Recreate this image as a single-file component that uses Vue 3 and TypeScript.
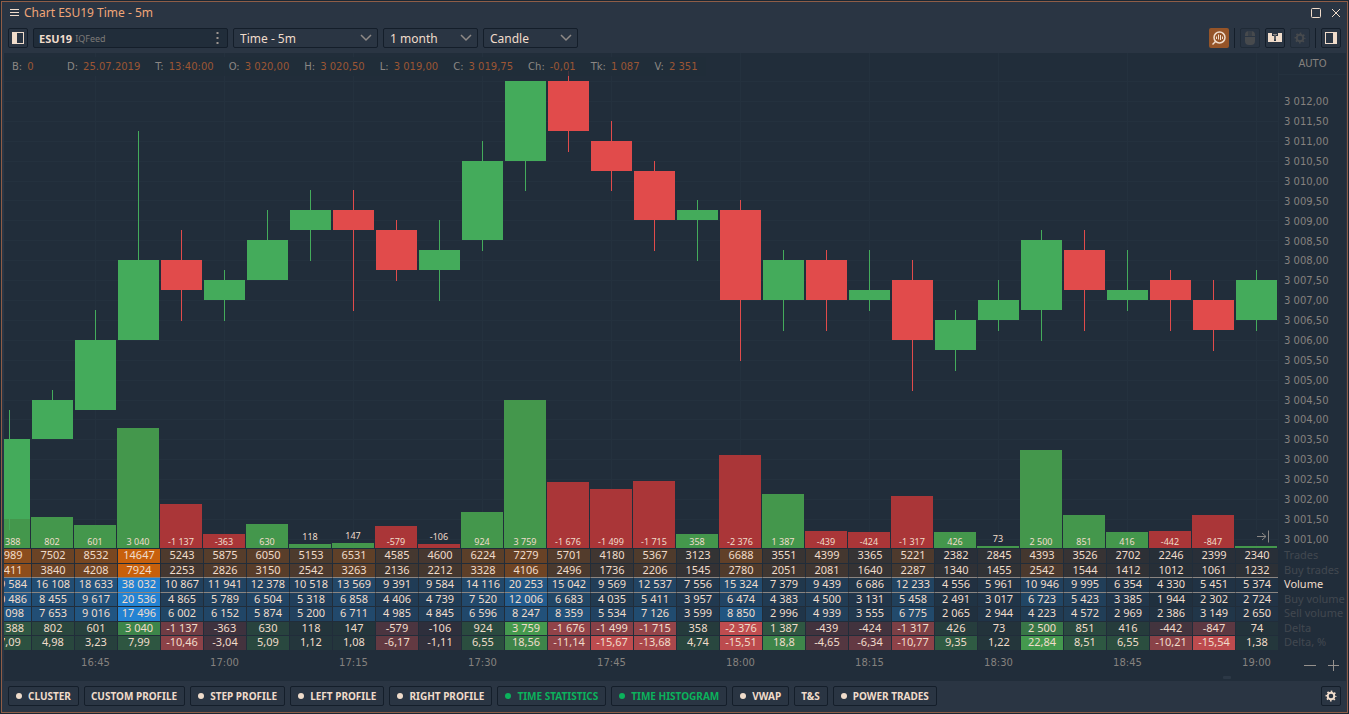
<script setup lang="ts">
import { ref } from 'vue'

type Rgb = [number, number, number]

const COL = 43
const PLOT_TOP = 53
const PLOT_HEIGHT = 496
const BASELINE = 495

const info: [string, string][] = [
  ['B:', '0'], ['D:', '25.07.2019'], ['T:', '13:40:00'], ['O:', '3 020,00'], ['H:', '3 020,50'],
  ['L:', '3 019,00'], ['C:', '3 019,75'], ['Ch:', '-0,01'], ['Tk:', '1 087'], ['V:', '2 351'],
]

// open, close, high, low as offsets from 3000
const candles: [number, number, number, number][] = [
  [1.5, 3.5, 4.25, 1.25], [3.5, 4.5, 4.75, 3.5], [4.25, 6, 6.75, 4.25], [6, 8, 11.25, 6],
  [8, 7.25, 8.75, 6.5], [7, 7.5, 7.75, 6.5], [7.5, 8.5, 9.25, 7.5], [8.75, 9.25, 9.75, 8],
  [9.25, 8.75, 9.75, 6.75], [8.75, 7.75, 9, 7.5], [7.75, 8.25, 9, 7], [8.5, 10.5, 11, 8.25],
  [10.5, 12.5, 12.5, 9.75], [12.5, 11.25, 12.75, 10.75], [11, 10.25, 11.5, 9.75], [10.25, 9, 10.5, 8.25],
  [9, 9.25, 9.5, 8], [9.25, 7, 9.5, 5.5], [7, 8, 8.25, 6.25], [8, 7, 8.25, 6.25],
  [7, 7.25, 8.25, 6.75], [7.5, 6, 8, 4.75], [5.75, 6.5, 6.75, 5.25], [6.5, 7, 7.5, 6.25],
  [6.75, 8.5, 8.75, 6], [8.25, 7.25, 8.75, 6.25], [7, 7.25, 8.25, 6.75], [7.5, 7, 7.75, 6.25],
  [7, 6.25, 7.5, 5.75], [6.5, 7.5, 7.75, 6.25],
]

const trades = [9989, 7502, 8532, 14647, 5243, 5875, 6050, 5153, 6531, 4585, 4600, 6224, 7279, 5701, 4180, 5367, 3123, 6688, 3551, 4399, 3365, 5221, 2382, 2845, 4393, 3526, 2702, 2246, 2399, 2340]
const buyTrades = [5411, 3840, 4208, 7924, 2253, 2826, 3150, 2542, 3263, 2136, 2212, 3328, 4106, 2496, 1736, 2206, 1545, 2780, 2051, 2081, 1640, 2287, 1340, 1455, 2542, 1544, 1412, 1012, 1061, 1232]
const volume = [19584, 16108, 18633, 38032, 10867, 11941, 12378, 10518, 13569, 9391, 9584, 14116, 20253, 15042, 9569, 12537, 7556, 15324, 7379, 9439, 6686, 12233, 4556, 5961, 10946, 9995, 6354, 4330, 5451, 5374]
const buyVolume = [10486, 8455, 9617, 20536, 4865, 5789, 6504, 5318, 6858, 4406, 4739, 7520, 12006, 6683, 4035, 5411, 3957, 6474, 4383, 4500, 3131, 5458, 2491, 3017, 6723, 5423, 3385, 1944, 2302, 2724]
const sellVolume = [9098, 7653, 9016, 17496, 6002, 6152, 5874, 5200, 6711, 4985, 4845, 6596, 8247, 8359, 5534, 7126, 3599, 8850, 2996, 4939, 3555, 6775, 2065, 2944, 4223, 4572, 2969, 2386, 3149, 2650]
const delta = [1388, 802, 601, 3040, -1137, -363, 630, 118, 147, -579, -106, 924, 3759, -1676, -1499, -1715, 358, -2376, 1387, -439, -424, -1317, 426, 73, 2500, 851, 416, -442, -847, 74]
const deltaPct = [7.09, 4.98, 3.23, 7.99, -10.46, -3.04, 5.09, 1.12, 1.08, -6.17, -1.11, 6.55, 18.56, -11.14, -15.67, -13.68, 4.74, -15.51, 18.8, -4.65, -6.34, -10.77, 9.35, 1.22, 22.84, 8.51, 6.55, -10.21, -15.54, 1.38]

const ORANGE: Rgb = [200, 96, 12]
const BLUE: Rgb = [35, 131, 211]
const GREEN: Rgb = [68, 153, 78]
const RED: Rgb = [190, 76, 79]

const spaced = (v: number): string => String(v).replace(/\B(?=(\d{3})+$)/g, ' ')
const comma = (v: number): string => String(v).replace('.', ',')
const fill = (c: Rgb, a: number): string => `rgba(${c[0]}, ${c[1]}, ${c[2]}, ${a.toFixed(3)})`

interface Cell { text: string; color: string }
interface Row { name: string; cells: Cell[]; active: boolean }

function heat(name: string, values: number[], color: Rgb, format: (v: number) => string, active = false): Row {
  const min = Math.min(...values)
  const max = Math.max(...values)
  return {
    name,
    active,
    cells: values.map(v => ({ text: format(v), color: fill(color, 0.04 + 0.96 * (v - min) / (max - min)) })),
  }
}

function signed(name: string, values: number[], format: (v: number) => string): Row {
  const max = Math.max(...values)
  const min = Math.min(...values)
  return {
    name,
    active: false,
    cells: values.map(v => ({
      text: format(v),
      color: v >= 0 ? fill(GREEN, 0.04 + 0.96 * v / max) : fill(RED, 0.04 + 0.96 * v / min),
    })),
  }
}

const rows: Row[] = [
  heat('Trades', trades, ORANGE, String),
  heat('Buy trades', buyTrades, ORANGE, String),
  heat('Volume', volume, BLUE, spaced, true),
  heat('Buy volume', buyVolume, BLUE, spaced),
  heat('Sell volume', sellVolume, BLUE, spaced),
  signed('Delta', delta, spaced),
  signed('Delta, %', deltaPct, comma),
]

const y = (price: number): number => Math.round(100.85 + (12 - price) * 39.83) - PLOT_TOP

const bodies = candles.map(([open, close, high, low], i) => ({
  x: i * COL + 1,
  top: y(Math.max(open, close)),
  height: y(Math.min(open, close)) - y(Math.max(open, close)),
  wickTop: y(high),
  wickHeight: y(low) - y(high) + (low < Math.min(open, close) ? 1 : 0),
  up: close > open,
}))

const peak = Math.max(...delta)
const bars = delta.map((v, i) => {
  const height = Math.floor(Math.abs(v) * 148.5 / peak)
  return {
    x: i * COL,
    height,
    up: v >= 0,
    label: i === delta.length - 1 ? '' : spaced(v),
    labelY: height < 13 ? BASELINE - height - 4 : BASELINE - 3,
  }
})

const hLines = Array.from({ length: 24 }, (_, i) => y(12.5 - i * 0.5))
const vLines = Array.from({ length: 10 }, (_, i) => (2 + i * 3) * COL + 21)

const prices = Array.from({ length: 23 }, (_, i) => {
  const v = 12 - i * 0.5
  return '3 0' + v.toFixed(2).padStart(5, '0').replace('.', ',')
})

const times = delta.map((_, i) => {
  if (i % 3 !== 2) return ''
  const minutes = 16 * 60 + 45 + (i - 2) * 5
  return `${Math.floor(minutes / 60)}:${String(minutes % 60).padStart(2, '0')}`
})

const period = ref('Time - 5m')
const range = ref('1 month')
const style = ref('Candle')

const tools = ref([
  { name: 'CLUSTER', dot: true, on: false },
  { name: 'CUSTOM PROFILE', dot: false, on: false },
  { name: 'STEP PROFILE', dot: true, on: false },
  { name: 'LEFT PROFILE', dot: true, on: false },
  { name: 'RIGHT PROFILE', dot: true, on: false },
  { name: 'TIME STATISTICS', dot: true, on: true },
  { name: 'TIME HISTOGRAM', dot: true, on: true },
  { name: 'VWAP', dot: true, on: false },
  { name: 'T&S', dot: false, on: false },
  { name: 'POWER TRADES', dot: true, on: false },
])
</script>

<template>
  <div class="window">
    <header class="titlebar">
      <button class="plain" aria-label="Menu">
        <svg width="10" height="10" viewBox="0 0 10 10"><path d="M0 1.5h9M0 4.5h9M0 7.5h9" /></svg>
      </button>
      <h1>Chart ESU19 Time - 5m</h1>
      <button class="plain" aria-label="Maximize">
        <svg width="10" height="10" viewBox="0 0 10 10"><rect x="0.5" y="0.5" width="9" height="9" rx="1" /></svg>
      </button>
      <button class="plain" aria-label="Close">
        <svg width="10" height="10" viewBox="0 0 10 10"><path d="M1 1l8 8M9 1l-8 8" /></svg>
      </button>
    </header>

    <div class="toolbar">
      <button class="square" aria-label="Left panel">
        <svg width="18" height="18" viewBox="0 0 18 18">
          <rect x="3.5" y="3.5" width="11" height="11" class="line" /><rect x="3" y="3" width="5" height="12" class="solid" />
        </svg>
      </button>
      <button class="symbol">
        <b>ESU19</b><span>IQFeed</span>
        <svg width="3" height="12" viewBox="0 0 3 12"><path d="M0.5 0h2v2h-2zM0.5 5h2v2h-2zM0.5 10h2v2h-2z" /></svg>
      </button>
      <label class="drop wide">
        <select v-model="period" aria-label="Period"><option>Time - 5m</option></select>
        <svg width="12" height="8" viewBox="0 0 12 8"><path d="M1 1l5 5 5-5" /></svg>
      </label>
      <label class="drop">
        <select v-model="range" aria-label="Range"><option>1 month</option></select>
        <svg width="12" height="8" viewBox="0 0 12 8"><path d="M1 1l5 5 5-5" /></svg>
      </label>
      <label class="drop">
        <select v-model="style" aria-label="Style"><option>Candle</option></select>
        <svg width="12" height="8" viewBox="0 0 12 8"><path d="M1 1l5 5 5-5" /></svg>
      </label>
      <span class="spacer"></span>
      <button class="square hot" aria-label="Analysis">
        <svg width="20" height="20" viewBox="0 0 20 20">
          <circle cx="10.5" cy="9.5" r="5.5" class="line thick" />
          <path d="M6.500 13.500L3.500 16.500" class="line thick" />
          <path d="M7.500 8.500v2.500M9.500 6.500v5M11.500 7v5M13.500 8.500v2.500" class="line" />
        </svg>
      </button>
      <i class="rule"></i>
      <button class="square off" disabled aria-label="Mouse trading">
        <svg width="18" height="18" viewBox="0 0 18 18">
          <rect x="4" y="2" width="10" height="14" rx="4" class="solid" />
          <path d="M4 7.500h10M8 2v5M10 2v5" class="split" />
        </svg>
      </button>
      <button class="square" aria-label="Order book">
        <svg width="18" height="18" viewBox="0 0 18 18">
          <path d="M2 4h14v9H2z" class="solid" />
          <path d="M6 4h6v3h-2v5H8V7H6z" class="cut" />
          <path d="M7 5.500h4M9 5.500v5" class="line faint" />
        </svg>
      </button>
      <button class="square off" disabled aria-label="Chart settings">
        <svg width="18" height="18" viewBox="0 0 18 18">
          <circle cx="9" cy="9" r="3.300" class="line thick" />
          <circle cx="9" cy="9" r="4.500" class="line teeth" />
        </svg>
      </button>
      <i class="rule"></i>
      <button class="square" aria-label="Right panel">
        <svg width="18" height="18" viewBox="0 0 18 18">
          <rect x="3.500" y="3.500" width="11" height="11" class="line" /><rect x="11" y="3" width="4" height="12" class="solid" />
        </svg>
      </button>
    </div>

    <main class="chart">
      <section class="upper">
        <div class="plot">
          <svg class="series" :width="COL * delta.length" :height="PLOT_HEIGHT">
            <line v-for="ly in hLines" :key="'h' + ly" x1="-4000" x2="1294" :y1="ly + 0.5" :y2="ly + 0.5" class="grid" />
            <line v-for="lx in vLines" :key="'v' + lx" :x1="lx + 0.5" :x2="lx + 0.5" y1="0" :y2="PLOT_HEIGHT" class="grid" />
            <rect v-for="b in bars" :key="'b' + b.x" :x="b.x" :y="BASELINE - b.height" width="42" :height="b.height" :class="b.up ? 'bar-up' : 'bar-down'" />
            <g v-for="c in bodies" :key="'c' + c.x" :class="c.up ? 'up' : 'down'">
              <rect :x="c.x + 20" :y="c.wickTop" width="1" :height="c.wickHeight" />
              <rect :x="c.x" :y="c.top" width="41" :height="c.height" />
            </g>
            <text v-for="b in bars" :key="'t' + b.x" :x="b.x + 21" :y="b.labelY" class="bar-label">{{ b.label }}</text>
          </svg>
          <dl class="info">
            <div v-for="[k, v] in info" :key="k"><dt>{{ k }}</dt><dd>{{ v }}</dd></div>
          </dl>
          <button class="latest" aria-label="Go to latest">
            <svg width="12" height="13" viewBox="0 0 12 13"><path d="M0 6.500h9M5 3l4 3.500L5 10M11.500 0.500v12" /></svg>
          </button>
        </div>
        <aside class="axis">
          <button class="auto">AUTO</button>
          <ul><li v-for="p in prices" :key="p">{{ p }}</li></ul>
        </aside>
      </section>

      <section class="stats">
        <table>
          <tbody>
            <tr v-for="r in rows" :key="r.name" :class="{ active: r.active }">
              <td v-for="(c, i) in r.cells" :key="i" :style="{ backgroundColor: c.color }">{{ c.text }}</td>
              <th scope="row">{{ r.name }}</th>
            </tr>
          </tbody>
          <tfoot>
            <tr>
              <td v-for="(t, i) in times" :key="i">{{ t }}</td>
              <td class="scale">
                <div>
                  <button aria-label="Zoom out"><svg width="12" height="12" viewBox="0 0 12 12"><path d="M0 6.500h12" /></svg></button>
                  <button aria-label="Zoom in"><svg width="12" height="12" viewBox="0 0 12 12"><path d="M0 6.500h11M5.500 1v11" /></svg></button>
                </div>
              </td>
            </tr>
          </tfoot>
        </table>
      </section>
      <div class="scroller"><i></i></div>
    </main>

    <footer class="tools">
      <button v-for="t in tools" :key="t.name" class="tool" :class="{ on: t.on }" @click="t.on = !t.on">
        <i v-if="t.dot"></i>{{ t.name }}
      </button>
      <span class="spacer"></span>
      <button class="square" aria-label="Settings">
        <svg width="18" height="18" viewBox="0 0 18 18">
          <circle cx="9" cy="9" r="3.300" class="line thick" />
          <circle cx="9" cy="9" r="4.500" class="line teeth" />
        </svg>
      </button>
    </footer>
  </div>
</template>

<style>
body {
  background: #1b2733;
}
</style>

<style scoped>
* {
  box-sizing: border-box;
}

.window {
  display: flex;
  flex-direction: column;
  min-height: calc(100vh - 2px);
  margin: 1px;
  border: 1px solid #8f5d47;
  background: #2a3543;
  color: #f0dccb;
  font-family: "Noto Sans", "Open Sans", sans-serif;
  font-size: 12px;
}

button {
  margin: 0;
  padding: 0;
  border: 0;
  background: none;
  color: inherit;
  font: inherit;
}

svg {
  display: block;
  fill: none;
}

.titlebar {
  display: flex;
  align-items: center;
  gap: 4px;
  height: 22px;
  padding: 0 6px 0 8px;
}

.titlebar h1 {
  flex: 1;
  margin: 0;
  color: #f0a578;
  font-size: 12px;
  font-weight: 400;
  line-height: 22px;
}

.plain svg {
  stroke: #f0dccb;
}

.plain + .plain {
  margin-left: 6px;
}

.toolbar {
  display: flex;
  align-items: center;
  gap: 5px;
  height: 29px;
  padding: 2px 6px 3px;
}

.spacer {
  flex: 1;
}

.square {
  width: 20px;
  height: 20px;
  border: 1px solid #141e2a;
  border-radius: 2px;
}

.line {
  stroke: #f0dccb;
}

.solid {
  fill: #f0dccb;
}

.cut {
  fill: #2a3543;
}

.split {
  stroke: #2a3543;
}

.faint {
  stroke: #8d8886;
}

.thick {
  stroke-width: 2;
}

.teeth {
  stroke-width: 2;
  stroke-dasharray: 1.534 2;
  stroke-dashoffset: 0.767;
}

.hot {
  border: 0;
  background: #955428;
}

.hot .thick {
  stroke-width: 1.5;
}

.off {
  border-color: #202b37;
}

.off .solid {
  fill: #474a4d;
}

.off .line {
  stroke: #474a4d;
}

.rule {
  width: 1px;
  height: 20px;
  background: #141e2a;
}

.symbol {
  display: flex;
  align-items: center;
  gap: 3px;
  width: 195px;
  height: 20px;
  padding: 0 8px 0 5px;
  border: 1px solid #141e2a;
  border-radius: 2px;
  background: #212d3a;
  font-size: 11px;
}

.symbol span {
  flex: 1;
  color: #7d7a78;
  font-size: 9px;
  text-align: left;
}

.symbol svg {
  fill: #9d958f;
}

.drop {
  display: grid;
  align-items: center;
  width: 95px;
  height: 20px;
  border: 1px solid #141e2a;
  border-radius: 2px;
}

.drop.wide {
  width: 145px;
}

.drop select,
.drop svg {
  grid-area: 1 / 1;
}

.drop select {
  width: 100%;
  height: 18px;
  padding: 0 20px 0 6px;
  border: 0;
  appearance: none;
  background: none;
  color: inherit;
  font: inherit;
}

.drop svg {
  justify-self: end;
  margin-right: 5px;
  stroke: #8f8a87;
  stroke-width: 1.5;
  pointer-events: none;
}

.chart {
  flex: 1;
  margin: 0 1px 0 2px;
  background: #212d3a;
}

.upper {
  display: flex;
}

.plot {
  position: relative;
  display: flex;
  flex: 1;
  justify-content: flex-end;
  min-width: 0;
  overflow: hidden;
}

.series {
  flex: none;
  overflow: visible;
}

.grid {
  stroke: #24313e;
}

.up {
  fill: #44ab5b;
}

.down {
  fill: #e14b4b;
}

.bar-up {
  fill: #44974c;
}

.bar-down {
  fill: #aa3638;
}

.bar-label {
  fill: #f0dccb;
  font-size: 9px;
  text-anchor: middle;
}

.info {
  position: absolute;
  top: 4px;
  left: 0;
  display: flex;
  gap: 15px;
  margin: 0;
  padding: 0 8px;
  background: rgba(33, 45, 58, 0.8);
  color: #8b8784;
  font-family: "DejaVu Sans", sans-serif;
  font-size: 10px;
  line-height: 19px;
}

.info div {
  display: flex;
  gap: 5px;
  min-width: 40px;
}

.info dd {
  margin: 0;
  color: #9c5634;
}

.latest {
  position: absolute;
  right: 8px;
  bottom: 6px;
  padding: 0 1px;
  background: #212d3a;
}

.latest svg {
  stroke: #8b8784;
}

.axis {
  width: 68px;
  border-left: 1px solid #24313e;
  color: #85817e;
  font-family: "DejaVu Sans", sans-serif;
  font-size: 10px;
}

.auto {
  display: block;
  width: 100%;
  height: 22px;
  border-bottom: 1px solid #24313e;
}

.axis ul {
  display: flex;
  flex-direction: column;
  height: 457px;
  margin: 17px 0 0;
  padding: 0 0 0 5px;
  list-style: none;
}

.axis li {
  display: flex;
  flex: 1;
  align-items: center;
}

.stats {
  display: flex;
  justify-content: flex-end;
  overflow-x: clip;
  overflow-y: visible;
}

table {
  flex: none;
  width: 1358px;
  border-collapse: separate;
  border-spacing: 0;
  table-layout: fixed;
}

td,
th {
  padding: 0;
  line-height: 12px;
  vertical-align: top;
  white-space: nowrap;
}

td {
  width: 43px;
  border: 0 solid #212d3a;
  border-width: 0 0 1px 1px;
  font-size: 11px;
  text-align: center;
}

th {
  width: 68px;
  padding-left: 6px;
  color: #414850;
  font-weight: 400;
  font-size: 11px;
  text-align: left;
}

tbody tr {
  height: 14px;
}

tbody tr:nth-child(odd):not(:last-child) {
  height: 15px;
}

tbody tr:last-child td {
  border-bottom-width: 0;
}

tbody tr:nth-child(2) td,
.active td {
  border-bottom-color: #8b8581;
  border-left-color: #212d3a;
}

.active th {
  color: #f0dccb;
}

tfoot td {
  height: 26px;
  border: 0;
  color: #85817e;
  font-family: "DejaVu Sans", sans-serif;
  font-size: 10px;
  line-height: 26px;
}

.scale {
  width: 68px;
}

.scale div {
  display: flex;
  gap: 12px;
  padding: 9px 0 0 26px;
}

.scale svg {
  stroke: #96918d;
}

.scroller {
  display: flex;
  justify-content: flex-end;
  height: 5px;
  padding-right: 115px;
}

.scroller i {
  width: 8px;
  height: 3px;
  border-radius: 1px;
  background: #2c3846;
}

.tools {
  display: flex;
  align-items: center;
  gap: 5px;
  height: 31px;
  padding: 0 6px 1px;
}

.tool {
  display: flex;
  align-items: center;
  gap: 6px;
  height: 20px;
  padding: 0 7px 0 6px;
  border: 1px solid #141e2a;
  border-radius: 2px;
  font-size: 10px;
  font-weight: 700;
  white-space: nowrap;
}

.tool:has(i) {
  padding-left: 7px;
}

.tool i {
  width: 6px;
  height: 6px;
  border-radius: 50%;
  background: currentColor;
}

.tool.on {
  color: #0bb25c;
}
</style>
